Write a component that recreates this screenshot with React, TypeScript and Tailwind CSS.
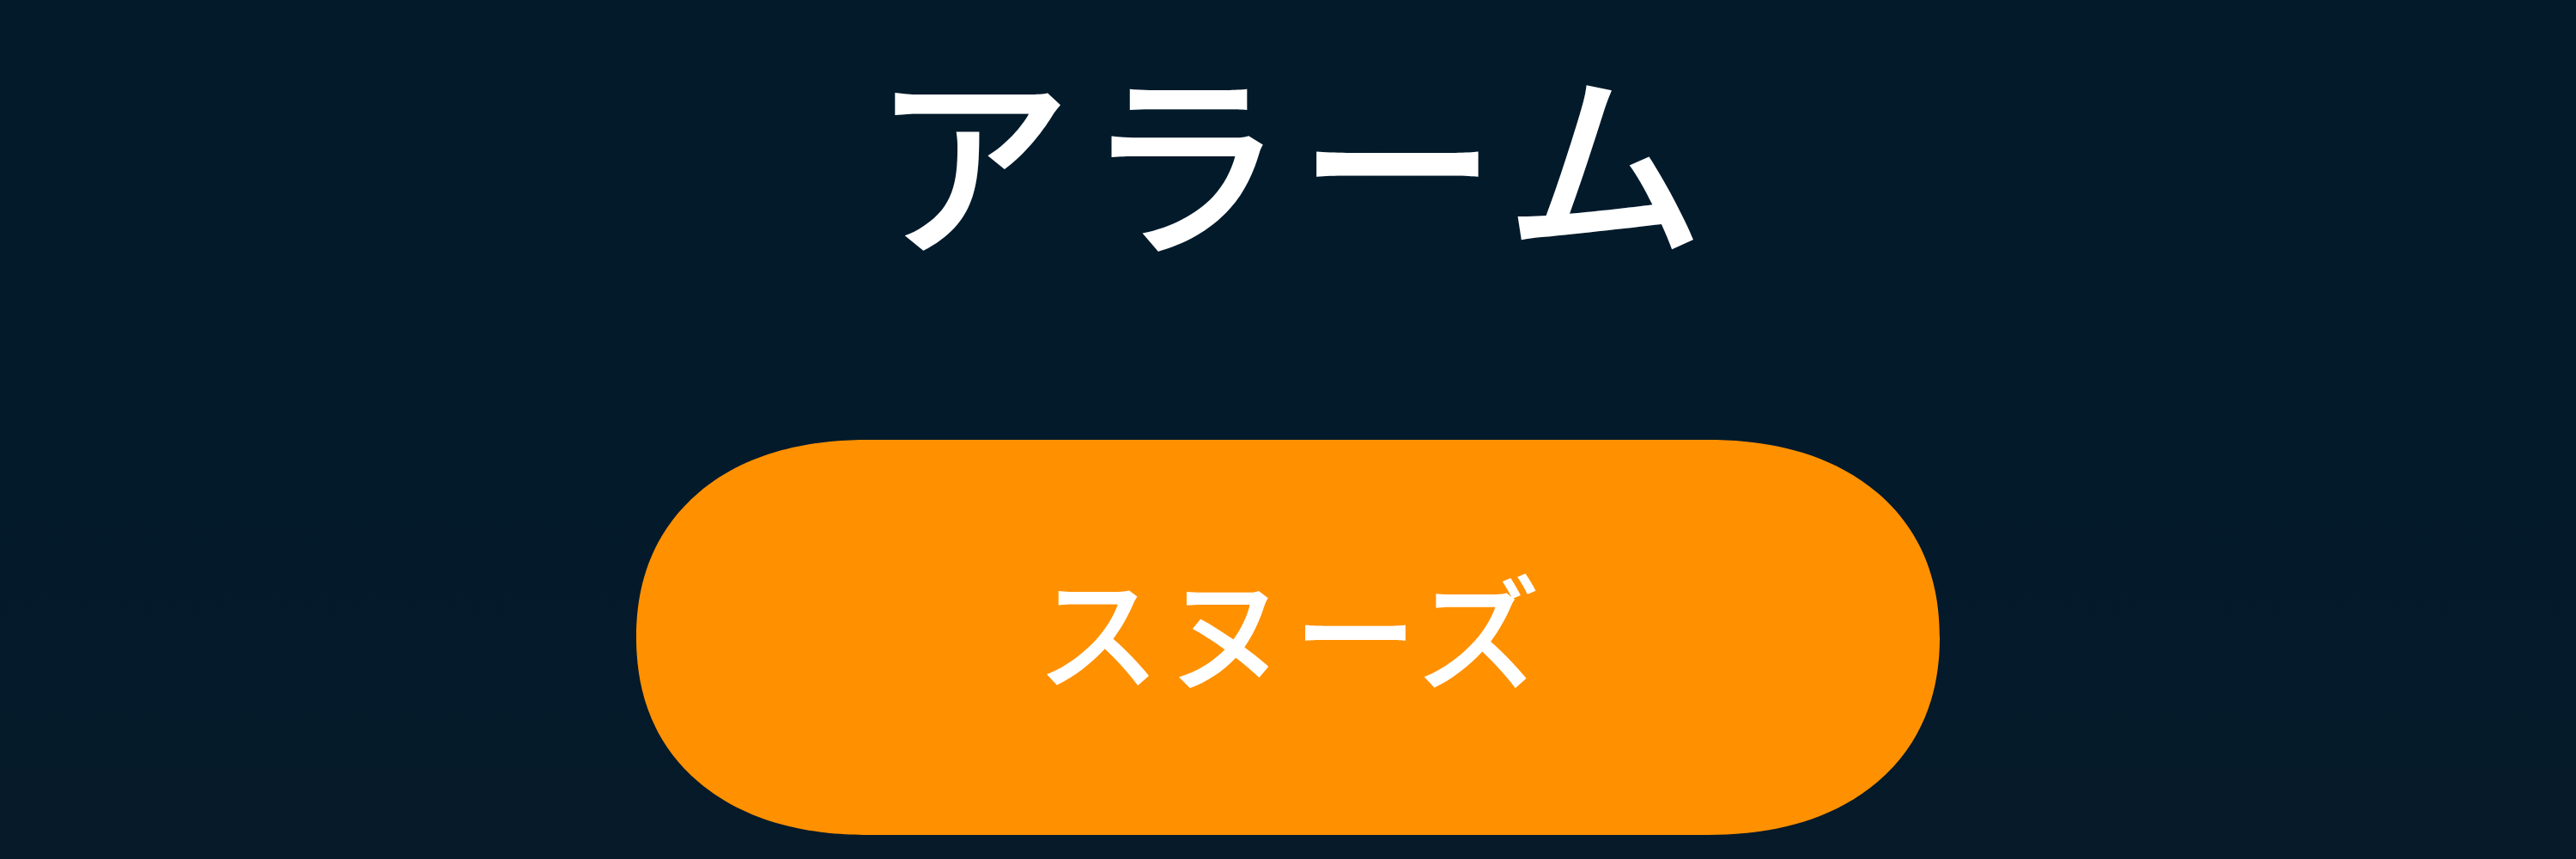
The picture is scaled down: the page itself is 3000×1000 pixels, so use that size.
import React from "react";

/* ============================================================
   ALARM
   Dark screen with the title and a big snooze button
=============================================================== */
export default function App() {
  const jp = "font-['Noto_Sans_CJK_JP','Noto_Sans',sans-serif]";

  return (
    <div
      className={`w-full h-[1000px] overflow-hidden flex flex-col items-center bg-gradient-to-b from-[#021a2a] via-[#031a2b] to-[#061a29] ${jp}`}
    >
      {/* ========================== TITLE ============================== */}
      <h1 className="mt-[62px] pl-[14px] text-[234px] leading-none font-medium tracking-[14px] text-white">
        アラーム
      </h1>

      {/* ========================== SNOOZE ============================== */}
      <button
        className="mt-[216px] w-[1518px] h-[460px] shrink-0 flex items-center justify-center pb-[24px] pl-[5px] bg-[#ff9000] text-white text-[145px] font-medium tracking-[5px] leading-none rounded-[270px/230px] [corner-shape:superellipse(1.15)]"
      >
        スヌーズ
      </button>
    </div>
  );
}
